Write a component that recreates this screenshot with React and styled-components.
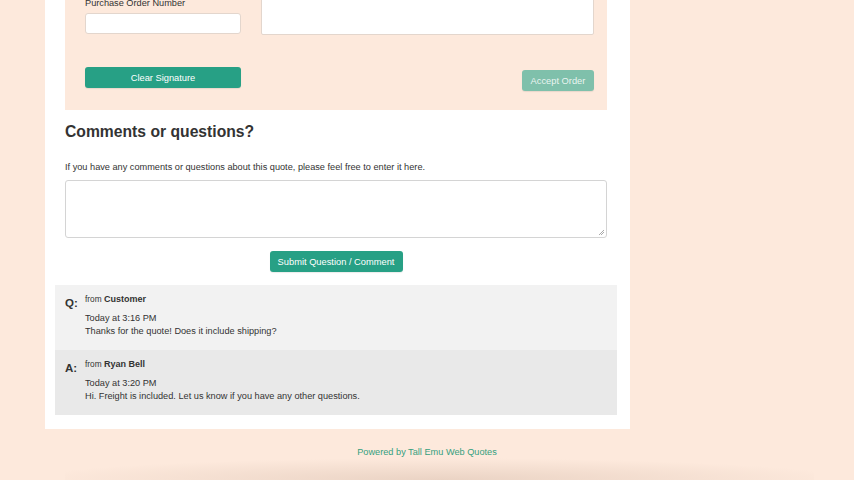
import React from 'react'
import styled, { createGlobalStyle } from 'styled-components'

const Global = createGlobalStyle`
  html, body {
    margin: 0;
    background: #fde9dc;
    font-family: "Liberation Sans", Arial, sans-serif;
    color: #333;
    overflow: hidden;
  }
`

const Page = styled.div`
  padding-left: 45px;
  height: 480px;
  display: flex;
  flex-direction: column;
`

const Card = styled.div`
  width: 542px;
  margin-top: -59px;
  background: #fff;
  padding: 0 23px 14px 20px;
`

const SignPanel = styled.div`
  background: #fde9dc;
  padding: 0 13px 19px 20px;
`

const SignTop = styled.div`
  display: grid;
  grid-template-columns: 156px 1fr;
  column-gap: 20px;
  align-items: end;
`

const Field = styled.div`
  display: flex;
  flex-direction: column;
  padding-bottom: 1px;
`

const Label = styled.label`
  font-size: 9.2px;
  line-height: 10px;
  color: #333;
`

const Input = styled.div`
  margin-top: 5px;
  height: 19px;
  background: #fff;
  border: 1px solid #e3d6cd;
  border-radius: 3px;
`

const SignatureBox = styled.div`
  height: 94px;
  background: #fff;
  border: 1px solid #e3d6cd;
  border-radius: 2px;
  box-sizing: border-box;
`

const ButtonRow = styled.div`
  display: flex;
  justify-content: space-between;
  align-items: flex-start;
  margin-top: 32px;
`

const Button = styled.button`
  height: 21px;
  width: ${p => p.$w}px;
  margin-top: ${p => p.$mt || 0}px;
  border: none;
  border-radius: 3px;
  background: ${p => (p.disabled ? '#7fc0ab' : '#27a085')};
  color: ${p => (p.disabled ? 'rgba(255,255,255,0.85)' : '#fff')};
  font-family: "Liberation Sans", Arial, sans-serif;
  font-size: 9.3px;
  padding: 0;
  box-shadow: 0 1px 1px rgba(0, 0, 0, 0.08);
`

const Heading = styled.h2`
  margin: 13px 0 0;
  font-size: 15.7px;
  line-height: 18px;
  font-weight: bold;
  color: #333;
`

const Intro = styled.p`
  margin: 21px 0 0;
  font-size: 9.2px;
  line-height: 10px;
`

const CommentBox = styled.div`
  margin-top: 8px;
  height: 56px;
  border: 1px solid #d4d4d4;
  border-radius: 3px;
  position: relative;
  &::after {
    content: '';
    position: absolute;
    right: 2px;
    bottom: 2px;
    width: 5px;
    height: 5px;
    background: linear-gradient(135deg, transparent 45%, #aaa 45%, #aaa 55%, transparent 55%, transparent 70%, #aaa 70%, #aaa 80%, transparent 80%);
  }
`

const SubmitWrap = styled.div`
  display: flex;
  justify-content: center;
  margin-top: 13px;
`

const Thread = styled.div`
  margin: 13px -10px 0;
`

const Message = styled.div`
  display: grid;
  grid-template-columns: 20px 1fr;
  padding: 9px 10px 12px;
  background: ${p => (p.$answer ? '#e9e9e9' : '#f2f2f2')};
`

const Letter = styled.div`
  font-size: 11.5px;
  font-weight: bold;
  line-height: 12px;
  margin-top: 3px;
`

const Body = styled.div`
  display: flex;
  flex-direction: column;
  font-size: 9.2px;
  line-height: 13px;
`

const From = styled.div`
  font-size: 8.3px;
  line-height: 10px;
  margin-bottom: 8px;
  b {
    font-size: 9px;
  }
`

const Footer = styled.div`
  margin-top: 18px;
  margin-left: -45px;
  text-align: center;
  font-size: 9.2px;
  line-height: 10px;
  color: #35a07e;
`

const Shade = styled.div`
  margin: auto 40px 0 20px;
  height: 22px;
  background: radial-gradient(ellipse 55% 100% at 50% 100%, rgba(190, 160, 140, 0.3), rgba(190, 160, 140, 0) 100%);
`

const messages = [
  { letter: 'Q:', who: 'Customer', when: 'Today at 3:16 PM', text: 'Thanks for the quote! Does it include shipping?' },
  { letter: 'A:', who: 'Ryan Bell', when: 'Today at 3:20 PM', text: 'Hi. Freight is included. Let us know if you have any other questions.', answer: true },
]

export default function App() {
  return (
    <>
      <Global />
      <Page>
        <Card>
          <SignPanel>
            <SignTop>
              <Field>
                <Label>Purchase Order Number</Label>
                <Input />
              </Field>
              <SignatureBox />
            </SignTop>
            <ButtonRow>
              <Button $w={156}>Clear Signature</Button>
              <Button $w={72} $mt={3} disabled>Accept Order</Button>
            </ButtonRow>
          </SignPanel>

          <Heading>Comments or questions?</Heading>
          <Intro>If you have any comments or questions about this quote, please feel free to enter it here.</Intro>
          <CommentBox />
          <SubmitWrap>
            <Button $w={133}>Submit Question / Comment</Button>
          </SubmitWrap>

          <Thread>
            {messages.map(m => (
              <Message key={m.letter} $answer={m.answer}>
                <Letter>{m.letter}</Letter>
                <Body>
                  <From>from <b>{m.who}</b></From>
                  <span>{m.when}</span>
                  <span>{m.text}</span>
                </Body>
              </Message>
            ))}
          </Thread>
        </Card>
        <Footer>Powered by Tall Emu Web Quotes</Footer>
        <Shade />
      </Page>
    </>
  )
}
